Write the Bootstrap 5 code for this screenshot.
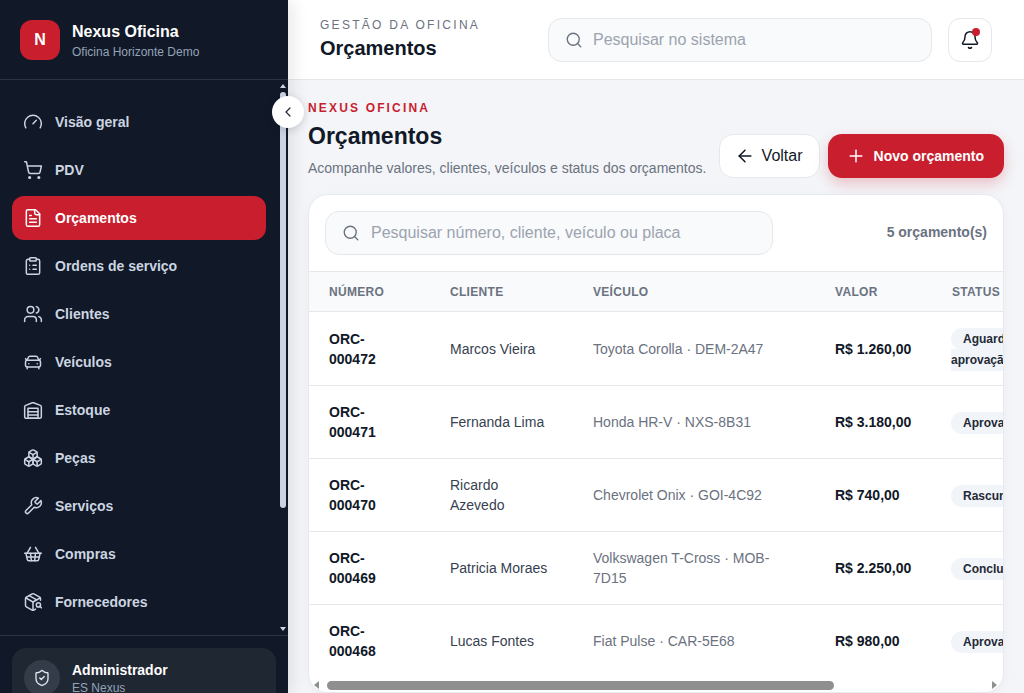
<!DOCTYPE html>
<html lang="pt-BR">
<head>
  <meta charset="UTF-8">
  <meta name="viewport" content="width=device-width, initial-scale=1.0">
  <title>Nexus Oficina - Orçamentos</title>
  <link href="https://cdn.jsdelivr.net/npm/bootstrap@5.3.0/dist/css/bootstrap.min.css" rel="stylesheet">
  <style>
    html, body { height: 100%; overflow: hidden; }
    body { font-family: "Liberation Sans", Arial, sans-serif; background: #f3f5f8; color: #111827; font-size: 14px; }
    .ico { fill: none; stroke: currentColor; stroke-width: 1.8; stroke-linecap: round; stroke-linejoin: round; flex: none; }

    .app-shell { height: 100vh; }
    .side-panel { width: 288px; flex: none; background: #111827; box-shadow: 4px 0 16px rgba(15, 23, 42, .1); z-index: 2; position: relative; height: 100vh; }
    .side-clip { height: 100vh; overflow: hidden; }
    .brand-row { height: 80px; flex: none; padding: 2px 20px 0; border-bottom: 1px solid #2b3442; gap: 12px; }
    .brand-logo { width: 40px; height: 40px; margin-top: -2px; border-radius: 12px; background: #c81e2e; color: #fff; font-weight: 700; font-size: 16px; }
    .brand-name { font-size: 16px; font-weight: 700; color: #fff; line-height: 20px; margin-top: 1px; }
    .brand-sub { font-size: 12px; color: #94a3b8; line-height: 16px; margin-top: 2px; }

    .nav-wrap { height: 555px; flex: none; }
    .side-nav { flex: 1 1 auto; min-width: 0; overflow: hidden; padding: 20px 14px 20px 12px; }
    .nav-entry { height: 44px; margin-bottom: 4px; padding: 0 11px; border-radius: 12px; color: #cbd5e1; font-weight: 700; font-size: 14px; text-decoration: none; gap: 12px; }
    .nav-entry.is-on { background: #c81e2e; color: #fff; }

    .v-bar { width: 8px; flex: none; padding-right: 2px; }
    .v-up { width: 0; height: 0; margin-top: 4px; border: 3px solid transparent; border-top: 0; border-bottom: 4px solid #cbd5e1; }
    .v-thumb { height: 416px; margin-top: 4px; border-radius: 3px; background: #cbd5e1; }
    .v-down { width: 0; height: 0; margin-top: auto; margin-bottom: 4px; border: 3px solid transparent; border-bottom: 0; border-top: 4px solid #cbd5e1; }

    .side-foot { flex: none; padding: 12px; border-top: 1px solid #2b3442; }
    .user-box { background: #1f2733; border-radius: 14px; padding: 12px; gap: 12px; }
    .user-avatar { width: 36px; height: 36px; border-radius: 50%; background: #343c49; color: #e2e8f0; flex: none; }
    .user-name { font-size: 14px; font-weight: 700; color: #fff; line-height: 20px; }
    .user-sub { font-size: 12px; color: #94a3b8; line-height: 16px; }

    .fold-btn { position: absolute; top: 96px; right: -16px; width: 32px; height: 32px; padding: 0; border: 0; border-radius: 50%; background: #fff; color: #1f2937; box-shadow: 0 2px 8px rgba(15, 23, 42, .18); z-index: 3; }

    .main-pane { min-width: 0; height: 100vh; overflow: hidden; }
    .top-strip { height: 80px; flex: none; background: #fff; border-bottom: 1px solid #e5e7eb; padding: 0 32px; gap: 16px; }
    .top-titles { width: 212px; flex: none; margin-top: -2px; }
    .top-kicker { font-size: 12px; color: #6b7280; letter-spacing: 2.28px; line-height: 16px; text-transform: uppercase; }
    .top-title { font-size: 20px; font-weight: 700; line-height: 26px; margin-top: 2px; }
    .find-box { height: 44px; background: #f8fafc; border: 1px solid #e5e7eb; border-radius: 14px; padding: 0 16px; gap: 10px; color: #6b7280; }
    .find-box .form-control { border: 0; background: transparent; padding: 0; font-size: 16px; box-shadow: none; height: 100%; color: #111827; border-radius: 0; }
    .find-box .form-control::placeholder { color: #9ca3af; opacity: 1; }
    .bell-btn { width: 44px; height: 44px; padding: 0; flex: none; background: #fff; border: 1px solid #e5e7eb; border-radius: 12px; color: #111827; position: relative; }
    .bell-dot { position: absolute; top: 9px; right: 11px; width: 8px; height: 8px; border-radius: 50%; background: #c81e2e; }

    .page-body { padding: 20px 20px 0; min-height: 0; }
    .head-block { margin-bottom: 16px; }
    .head-kicker { font-size: 12px; font-weight: 700; color: #c81e2e; letter-spacing: 2.16px; line-height: 16px; }
    .head-title { font-size: 23px; font-weight: 700; line-height: 32px; margin: 4px 0 6px; }
    .head-text { font-size: 14px; color: #6b7280; line-height: 20px; margin: 0; }
    .act-btn { height: 44px; border-radius: 14px; white-space: nowrap; }
    .act-light { background: #fff; border: 1px solid #e5e7eb; color: #111827; font-size: 16px; padding: 0 16px 0 15px; gap: 7px; }
    .act-red { background: #c81e2e; border: 0; color: #fff; font-size: 14px; font-weight: 700; padding: 0 20px 0 18px; gap: 8px; box-shadow: 0 6px 14px rgba(200, 30, 46, .24); }

    .list-panel { background: #fff; border: 1px solid #e7ebf0; border-radius: 20px; overflow: hidden; flex: 1 1 auto; min-height: 0; box-shadow: 0 2px 10px rgba(15, 23, 42, .04); }
    .list-tools { padding: 16px; height: 76px; flex: none; }
    .list-find { width: 448px; height: 44px; gap: 11px; }
    .list-count { font-size: 14px; font-weight: 700; color: #6b7280; margin-bottom: 1px; }
    .list-scroll { overflow: hidden; flex: 1 1 auto; min-height: 0; }
    .h-bar { height: 14px; flex: none; padding: 0 6px 0 5px; background: #fff; }
    .h-left { width: 0; height: 0; border: 4.5px solid transparent; border-left: 0; border-right: 5px solid #8f8f8f; }
    .h-thumb { width: 507px; height: 9px; margin-left: 8px; border-radius: 5px; background: #8f8f8f; }
    .h-right { width: 0; height: 0; margin-left: auto; border: 4.5px solid transparent; border-right: 0; border-left: 5px solid #8f8f8f; }

    .quote-table { table-layout: fixed; width: 915px; min-width: 915px; margin: 0; font-size: 14px; }
    .quote-table th { background: #f8fafc; color: #6b7280; font-size: 12px; font-weight: 700; letter-spacing: .3px; text-transform: uppercase; padding: 0 20px; height: 40px; border-top: 1px solid #e5e7eb; border-bottom: 1px solid #e5e7eb; vertical-align: middle; }
    .quote-table td { padding: 16px 20px; line-height: 20px; border-bottom: 1px solid #e5e7eb; color: #374151; vertical-align: middle; }
    .quote-table tbody tr:first-child td { padding-bottom: 15px; }
    .quote-table tr:last-child td { border-bottom: 0; }
    .quote-table td.cell-strong { font-weight: 700; color: #111827; }
    .quote-table td.cell-soft { color: #6b7280; }
    .state-tag { background: #f1f5f9; border-radius: 999px; padding: 4px 12px; font-size: 12px; font-weight: 700; color: #1f2937; }
    .quote-table td.cell-state { padding-left: 19px; }
  </style>
</head>
<body>

<svg width="0" height="0" class="position-absolute">
  <symbol id="i-gauge" viewBox="0 0 24 24"><path d="m12 14 4-4"/><path d="M3.34 19a10 10 0 1 1 17.32 0"/></symbol>
  <symbol id="i-cart" viewBox="0 0 24 24"><circle cx="8" cy="21" r="1"/><circle cx="19" cy="21" r="1"/><path d="M2.05 2.05h2l2.66 12.42a2 2 0 0 0 2 1.58h9.78a2 2 0 0 0 1.95-1.57l1.65-7.43H5.12"/></symbol>
  <symbol id="i-file" viewBox="0 0 24 24"><path d="M15 2H6a2 2 0 0 0-2 2v16a2 2 0 0 0 2 2h12a2 2 0 0 0 2-2V7Z"/><path d="M14 2v4a2 2 0 0 0 2 2h4"/><path d="M10 9H8"/><path d="M16 13H8"/><path d="M16 17H8"/></symbol>
  <symbol id="i-clip" viewBox="0 0 24 24"><rect x="8" y="2" width="8" height="4" rx="1"/><path d="M16 4h2a2 2 0 0 1 2 2v14a2 2 0 0 1-2 2H6a2 2 0 0 1-2-2V6a2 2 0 0 1 2-2h2"/><path d="M12 11h4"/><path d="M12 16h4"/><path d="M8 11h.01"/><path d="M8 16h.01"/></symbol>
  <symbol id="i-users" viewBox="0 0 24 24"><path d="M16 21v-2a4 4 0 0 0-4-4H6a4 4 0 0 0-4 4v2"/><circle cx="9" cy="7" r="4"/><path d="M22 21v-2a4 4 0 0 0-3-3.87"/><path d="M16 3.13a4 4 0 0 1 0 7.75"/></symbol>
  <symbol id="i-car" viewBox="0 0 24 24"><path d="m21 8-2 2-1.5-3.7A2 2 0 0 0 15.646 5H8.4a2 2 0 0 0-1.903 1.257L5 10 3 8"/><path d="M7 14h.01"/><path d="M17 14h.01"/><rect x="3" y="10" width="18" height="8" rx="2"/><path d="M5 18v2"/><path d="M19 18v2"/></symbol>
  <symbol id="i-store" viewBox="0 0 24 24"><path d="M22 8.35V20a2 2 0 0 1-2 2H4a2 2 0 0 1-2-2V8.35A2 2 0 0 1 3.26 6.5l8-3.2a2 2 0 0 1 1.48 0l8 3.2A2 2 0 0 1 22 8.35Z"/><path d="M6 18h12"/><path d="M6 14h12"/><rect x="6" y="10" width="12" height="12"/></symbol>
  <symbol id="i-boxes" viewBox="0 0 24 24"><path d="M2.97 12.92A2 2 0 0 0 2 14.63v3.24a2 2 0 0 0 .97 1.71l3 1.8a2 2 0 0 0 2.06 0L12 19v-5.5l-5-3-4.03 2.42Z"/><path d="m7 16.5-4.74-2.85"/><path d="m7 16.5 5-3"/><path d="M7 16.5v5.17"/><path d="M12 13.5V19l3.97 2.38a2 2 0 0 0 2.06 0l3-1.8a2 2 0 0 0 .97-1.71v-3.24a2 2 0 0 0-.97-1.71L17 10.5l-5 3Z"/><path d="m17 16.5-5-3"/><path d="m17 16.5 4.74-2.85"/><path d="M17 16.5v5.17"/><path d="M7.97 4.42A2 2 0 0 0 7 6.13v4.37l5 3 5-3V6.13a2 2 0 0 0-.97-1.71l-3-1.8a2 2 0 0 0-2.06 0l-3 1.8Z"/><path d="M12 8 7.26 5.15"/><path d="m12 8 4.74-2.85"/><path d="M12 13.5V8"/></symbol>
  <symbol id="i-wrench" viewBox="0 0 24 24"><path d="M14.7 6.3a1 1 0 0 0 0 1.4l1.6 1.6a1 1 0 0 0 1.4 0l3.77-3.77a6 6 0 0 1-7.94 7.94l-6.91 6.91a2.12 2.12 0 0 1-3-3l6.91-6.91a6 6 0 0 1 7.94-7.94l-3.76 3.76z"/></symbol>
  <symbol id="i-basket" viewBox="0 0 24 24"><path d="m15 11-1 9"/><path d="m19 11-4-7"/><path d="M2 11h20"/><path d="m3.5 11 1.6 7.4a2 2 0 0 0 2 1.6h9.8a2 2 0 0 0 2-1.6l1.7-7.4"/><path d="M4.5 15.5h15"/><path d="m5 11 4-7"/><path d="m9 11 1 9"/></symbol>
  <symbol id="i-pack" viewBox="0 0 24 24"><path d="M21 10V8a2 2 0 0 0-1-1.73l-7-4a2 2 0 0 0-2 0l-7 4A2 2 0 0 0 3 8v8a2 2 0 0 0 1 1.73l7 4a2 2 0 0 0 2 0l2-1.14"/><path d="m7.5 4.27 9 5.15"/><polyline points="3.29 7 12 12 20.71 7"/><line x1="12" y1="22" x2="12" y2="12"/><circle cx="18.5" cy="15.5" r="2.5"/><path d="M20.27 17.27 22 19"/></symbol>
  <symbol id="i-shield" viewBox="0 0 24 24"><path d="M20 13c0 5-3.5 7.5-7.66 8.95a1 1 0 0 1-.67-.01C7.5 20.5 4 18 4 13V6a1 1 0 0 1 1-1c2 0 4.5-1.2 6.24-2.72a1.17 1.17 0 0 1 1.52 0C14.51 3.81 17 5 19 5a1 1 0 0 1 1 1z"/><path d="m9 12 2 2 4-4"/></symbol>
  <symbol id="i-bell" viewBox="0 0 24 24"><path d="M10.268 21a2 2 0 0 0 3.464 0"/><path d="M3.262 15.326A1 1 0 0 0 4 17h16a1 1 0 0 0 .74-1.673C19.41 13.956 18 12.499 18 8A6 6 0 0 0 6 8c0 4.499-1.411 5.956-2.738 7.326"/></symbol>
  <symbol id="i-search" viewBox="0 0 24 24"><path d="m21 21-4.34-4.34"/><circle cx="11" cy="11" r="8"/></symbol>
  <symbol id="i-back" viewBox="0 0 24 24"><path d="m12 19-7-7 7-7"/><path d="M19 12H5"/></symbol>
  <symbol id="i-plus" viewBox="0 0 24 24"><path d="M5 12h14"/><path d="M12 5v14"/></symbol>
  <symbol id="i-chev" viewBox="0 0 24 24"><path d="m15 18-6-6 6-6"/></symbol>
</svg>

<div class="app-shell d-flex">
  <aside class="side-panel">
    <div class="side-clip d-flex flex-column">
      <div class="brand-row d-flex align-items-center">
        <div class="brand-logo d-flex align-items-center justify-content-center">N</div>
        <div>
          <div class="brand-name">Nexus Oficina</div>
          <div class="brand-sub">Oficina Horizonte Demo</div>
        </div>
      </div>

      <div class="nav-wrap d-flex">
        <nav class="side-nav">
          <a href="#" class="nav-entry d-flex align-items-center"><svg class="ico" width="20" height="20"><use href="#i-gauge"/></svg>Visão geral</a>
          <a href="#" class="nav-entry d-flex align-items-center"><svg class="ico" width="20" height="20"><use href="#i-cart"/></svg>PDV</a>
          <a href="#" class="nav-entry is-on d-flex align-items-center"><svg class="ico" width="20" height="20"><use href="#i-file"/></svg>Orçamentos</a>
          <a href="#" class="nav-entry d-flex align-items-center"><svg class="ico" width="20" height="20"><use href="#i-clip"/></svg>Ordens de serviço</a>
          <a href="#" class="nav-entry d-flex align-items-center"><svg class="ico" width="20" height="20"><use href="#i-users"/></svg>Clientes</a>
          <a href="#" class="nav-entry d-flex align-items-center"><svg class="ico" width="20" height="20"><use href="#i-car"/></svg>Veículos</a>
          <a href="#" class="nav-entry d-flex align-items-center"><svg class="ico" width="20" height="20"><use href="#i-store"/></svg>Estoque</a>
          <a href="#" class="nav-entry d-flex align-items-center"><svg class="ico" width="20" height="20"><use href="#i-boxes"/></svg>Peças</a>
          <a href="#" class="nav-entry d-flex align-items-center"><svg class="ico" width="20" height="20"><use href="#i-wrench"/></svg>Serviços</a>
          <a href="#" class="nav-entry d-flex align-items-center"><svg class="ico" width="20" height="20"><use href="#i-basket"/></svg>Compras</a>
          <a href="#" class="nav-entry d-flex align-items-center"><svg class="ico" width="20" height="20"><use href="#i-pack"/></svg>Fornecedores</a>
        </nav>
        <div class="v-bar d-flex flex-column" aria-hidden="true">
          <div class="v-up"></div>
          <div class="v-thumb"></div>
          <div class="v-down"></div>
        </div>
      </div>

      <div class="side-foot">
        <div class="user-box d-flex align-items-center">
          <div class="user-avatar d-flex align-items-center justify-content-center"><svg class="ico" width="18" height="18"><use href="#i-shield"/></svg></div>
          <div>
            <div class="user-name">Administrador</div>
            <div class="user-sub">ES Nexus</div>
          </div>
        </div>
      </div>
    </div>
    <button class="fold-btn d-flex align-items-center justify-content-center" type="button" aria-label="Recolher menu"><svg class="ico" width="16" height="16"><use href="#i-chev"/></svg></button>
  </aside>

  <main class="main-pane flex-grow-1 d-flex flex-column">
    <header class="top-strip d-flex align-items-center">
      <div class="top-titles">
        <div class="top-kicker">Gestão da oficina</div>
        <div class="top-title">Orçamentos</div>
      </div>
      <label class="find-box d-flex align-items-center flex-grow-1 mb-0">
        <svg class="ico" width="18" height="18"><use href="#i-search"/></svg>
        <input class="form-control" type="text" placeholder="Pesquisar no sistema">
      </label>
      <button class="bell-btn d-flex align-items-center justify-content-center" type="button" aria-label="Notificações">
        <svg class="ico" width="20" height="20"><use href="#i-bell"/></svg>
        <span class="bell-dot"></span>
      </button>
    </header>

    <div class="page-body flex-grow-1 d-flex flex-column">
      <div class="head-block d-flex align-items-end justify-content-between">
        <div>
          <div class="head-kicker">NEXUS OFICINA</div>
          <h1 class="head-title">Orçamentos</h1>
          <p class="head-text">Acompanhe valores, clientes, veículos e status dos orçamentos.</p>
        </div>
        <div class="d-flex gap-2">
          <button class="btn act-btn act-light d-flex align-items-center" type="button"><svg class="ico" width="20" height="20"><use href="#i-back"/></svg>Voltar</button>
          <button class="btn act-btn act-red d-flex align-items-center" type="button"><svg class="ico" width="20" height="20"><use href="#i-plus"/></svg>Novo orçamento</button>
        </div>
      </div>

      <section class="list-panel d-flex flex-column">
        <div class="list-tools d-flex align-items-center justify-content-between">
          <label class="find-box list-find d-flex align-items-center mb-0">
            <svg class="ico" width="18" height="18"><use href="#i-search"/></svg>
            <input class="form-control" type="text" placeholder="Pesquisar número, cliente, veículo ou placa">
          </label>
          <div class="list-count">5 orçamento(s)</div>
        </div>
        <div class="list-scroll">
          <table class="table quote-table">
            <colgroup><col style="width:121px"><col style="width:143px"><col style="width:242px"><col style="width:117px"><col style="width:130px"><col style="width:162px"></colgroup>
            <thead>
              <tr><th>Número</th><th>Cliente</th><th>Veículo</th><th>Valor</th><th>Status</th><th>Ações</th></tr>
            </thead>
            <tbody>
              <tr>
                <td class="cell-strong">ORC-000472</td><td>Marcos Vieira</td><td class="cell-soft">Toyota Corolla · DEM-2A47</td><td class="cell-strong">R$ 1.260,00</td>
                <td class="cell-state"><span class="state-tag">Aguardando aprovação</span></td><td>Abrir</td>
              </tr>
              <tr>
                <td class="cell-strong">ORC-000471</td><td>Fernanda Lima</td><td class="cell-soft">Honda HR-V · NXS-8B31</td><td class="cell-strong">R$ 3.180,00</td>
                <td class="cell-state"><span class="state-tag">Aprovado</span></td><td>Abrir</td>
              </tr>
              <tr>
                <td class="cell-strong">ORC-000470</td><td>Ricardo Azevedo</td><td class="cell-soft">Chevrolet Onix · GOI-4C92</td><td class="cell-strong">R$ 740,00</td>
                <td class="cell-state"><span class="state-tag">Rascunho</span></td><td>Abrir</td>
              </tr>
              <tr>
                <td class="cell-strong">ORC-000469</td><td>Patricia Moraes</td><td class="cell-soft">Volkswagen T-Cross · MOB-7D15</td><td class="cell-strong">R$ 2.250,00</td>
                <td class="cell-state"><span class="state-tag">Concluído</span></td><td>Abrir</td>
              </tr>
              <tr>
                <td class="cell-strong">ORC-000468</td><td>Lucas Fontes</td><td class="cell-soft">Fiat Pulse · CAR-5E68</td><td class="cell-strong">R$ 980,00</td>
                <td class="cell-state"><span class="state-tag">Aprovado</span></td><td>Abrir</td>
              </tr>
            </tbody>
          </table>
        </div>
        <div class="h-bar d-flex align-items-center" aria-hidden="true">
          <div class="h-left"></div>
          <div class="h-thumb"></div>
          <div class="h-right"></div>
        </div>
      </section>
    </div>
  </main>
</div>

<script src="https://cdn.jsdelivr.net/npm/bootstrap@5.3.0/dist/js/bootstrap.bundle.min.js"></script>
</body>
</html>
